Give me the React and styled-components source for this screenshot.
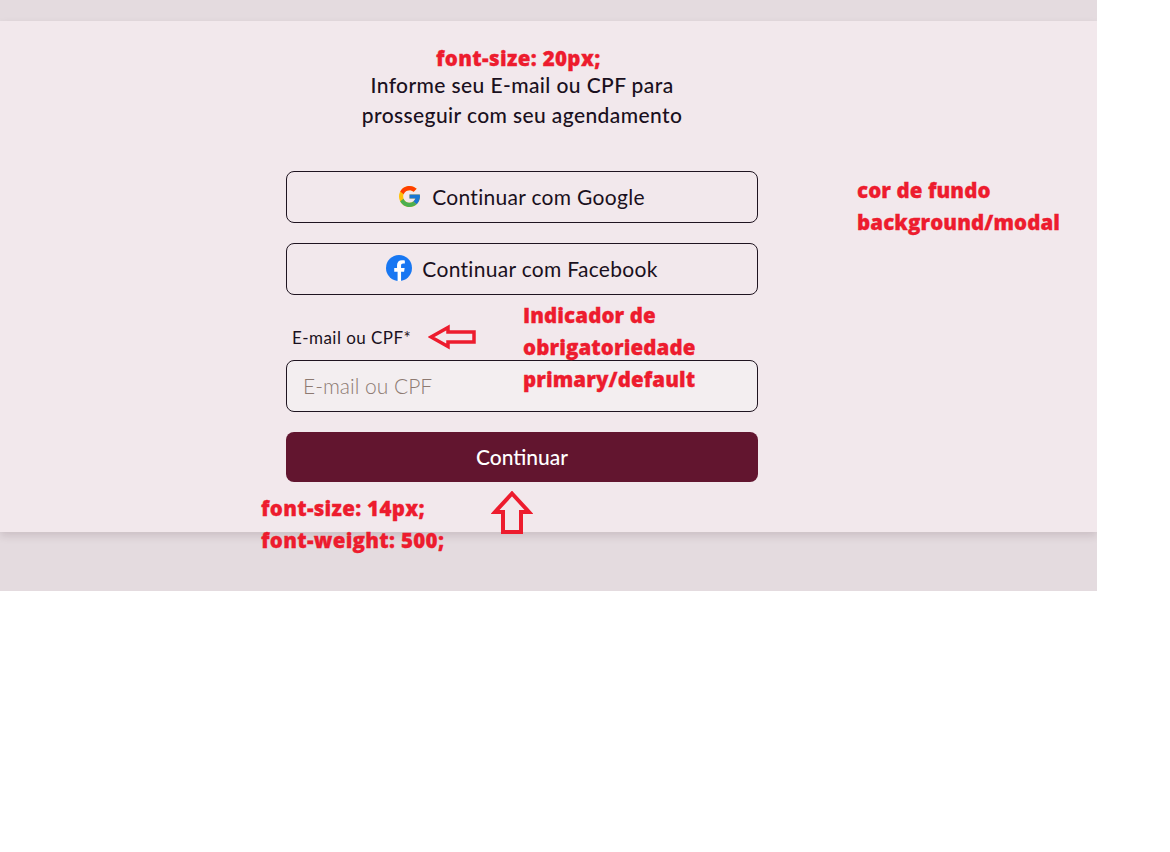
import React from 'react';
import styled, { createGlobalStyle } from 'styled-components';

const GlobalStyle = createGlobalStyle`
  body {
    margin: 0;
    background: #ffffff;
    font-family: "Lato", "Noto Sans", sans-serif;
  }
`;

function GoogleIcon() {
  return (
    <svg width="21" height="21" viewBox="4 4 40 40">
      <path fill="#FFC107" d="M43.611 20.083H42V20H24v8h11.303c-1.649 4.657-6.08 8-11.303 8-6.627 0-12-5.373-12-12s5.373-12 12-12c3.059 0 5.842 1.154 7.961 3.039l5.657-5.657C34.046 6.053 29.268 4 24 4 12.955 4 4 12.955 4 24s8.955 20 20 20 20-8.955 20-20c0-1.341-.138-2.650-.389-3.917z"/>
      <path fill="#FF3D00" d="M6.306 14.691l6.571 4.819C14.655 15.108 18.961 12 24 12c3.059 0 5.842 1.154 7.961 3.039l5.657-5.657C34.046 6.053 29.268 4 24 4 16.318 4 9.656 8.337 6.306 14.691z"/>
      <path fill="#4CAF50" d="M24 44c5.166 0 9.860-1.977 13.409-5.192l-6.190-5.238A11.910 11.910 0 0 1 24 36c-5.202 0-9.619-3.317-11.283-7.946l-6.522 5.025C9.505 39.556 16.227 44 24 44z"/>
      <path fill="#1976D2" d="M43.611 20.083H42V20H24v8h11.303a12.040 12.040 0 0 1-4.087 5.571l.003-.002 6.190 5.238C36.971 39.205 44 34 44 24c0-1.341-.138-2.650-.389-3.917z"/>
    </svg>
  );
}

function FacebookIcon() {
  return (
    <svg width="26" height="26" viewBox="0 0 24 24">
      <circle cx="12" cy="12" r="12" fill="#1877F2"/>
      <path fill="#ffffff" d="M16.700 15.500l.5-3.500h-3.300V9.800c0-1 .5-1.900 2-1.900h1.500V5c0 0-1.400-.2-2.700-.2-2.700 0-4.500 1.700-4.500 4.600V12H7.600v3.500h3.100V24h3.200v-8.500h2.800z"/>
    </svg>
  );
}

export default function App() {
  return (
    <Stage>
      <GlobalStyle />
      <Modal>
        <Form>
          <Title>Informe seu E-mail ou CPF para<br />prosseguir com seu agendamento</Title>
          <OutlineButton type="button" $gap={12}><GoogleIcon />Continuar com Google</OutlineButton>
          <OutlineButton type="button" $gap={10}><FacebookIcon />Continuar com Facebook</OutlineButton>
          <Label htmlFor="login">E-mail ou CPF*</Label>
          <Input id="login" placeholder="E-mail ou CPF" />
          <SubmitButton type="button">Continuar</SubmitButton>
        </Form>
      </Modal>

      <Note $left={436} $top={42} $spacing={0.35}>font-size: 20px;</Note>
      <Note $left={857} $top={174}>cor de fundo<br />background/modal</Note>
      <Note $left={523} $top={299}>Indicador de<br />obrigatoriedade<br />primary/default</Note>
      <Note $left={261} $top={492} $spacing={0.3}>font-size: 14px;<br />font-weight: 500;</Note>

      <LeftArrow width="48" height="26" viewBox="0 0 48 26">
        <path d="M3 13 L20 3.500 V8 H46 V18 H20 V22.500 Z" fill="none" stroke="#ed1c2e" strokeWidth="3.500" />
      </LeftArrow>
      <UpArrow width="42" height="44" viewBox="0 0 42 44">
        <path d="M21 2.500 L38 21 H30 V41 H12 V21 H4 Z" fill="none" stroke="#ed1c2e" strokeWidth="4" />
      </UpArrow>
    </Stage>
  );
}

const Stage = styled.div`
  position: relative;
  overflow: hidden;
  box-sizing: border-box;
  width: 1097px;
  height: 591px;
  padding-top: 21px;
  background-color: #e4dbdf;
`;

const Modal = styled.div`
  box-sizing: border-box;
  height: 511px;
  padding: 50px 0 0 286px;
  background-color: #f2e8ec;
  box-shadow: 0 4px 8px rgba(60, 30, 40, 0.14);
`;

const Form = styled.div`
  display: flex;
  flex-direction: column;
  width: 472px;
`;

const Title = styled.div`
  margin: -1px 0 41px;
  font-size: 21px;
  line-height: 30px;
  font-weight: 500;
  letter-spacing: 0.4px;
  text-align: center;
  color: #1a1020;
`;

const OutlineButton = styled.button`
  display: flex;
  align-items: center;
  justify-content: center;
  gap: ${props => props.$gap}px;
  box-sizing: border-box;
  height: 52px;
  margin-bottom: 20px;
  padding: 0 0 2px;
  border: 1px solid #1f1420;
  border-radius: 8px;
  background: transparent;
  font-family: inherit;
  font-size: 21px;
  letter-spacing: 0.3px;
  color: #1a1020;
`;

const Label = styled.label`
  margin: 13px 0 12px 6px;
  font-size: 17px;
  line-height: 20px;
  letter-spacing: 0.45px;
  color: #1a1020;
`;

const Input = styled.input`
  box-sizing: border-box;
  height: 52px;
  margin-bottom: 20px;
  padding: 0 16px 2px;
  border: 1px solid #1f1420;
  border-radius: 8px;
  background: #f3eef0;
  font-family: inherit;
  font-size: 21px;
  font-weight: 300;
  &::placeholder {
    color: #8d7a72;
    opacity: 1;
  }
`;

const SubmitButton = styled.button`
  height: 50px;
  padding: 0 0 2px;
  border: none;
  border-radius: 8px;
  background-color: #62152f;
  font-family: inherit;
  font-size: 21px;
  font-weight: 500;
  color: #ffffff;
`;

const Note = styled.div`
  position: absolute;
  left: ${props => props.$left}px;
  top: ${props => props.$top}px;
  font-family: "Open Sans", "Noto Sans", sans-serif;
  font-size: 20.500px;
  line-height: 32px;
  font-weight: 800;
  letter-spacing: ${props => props.$spacing || 0.1}px;
  -webkit-text-stroke: 0.3px #ed1c2e;
  white-space: nowrap;
  color: #ed1c2e;
`;

const LeftArrow = styled.svg`
  position: absolute;
  left: 428px;
  top: 324px;
`;

const UpArrow = styled.svg`
  position: absolute;
  left: 491px;
  top: 491px;
`;
